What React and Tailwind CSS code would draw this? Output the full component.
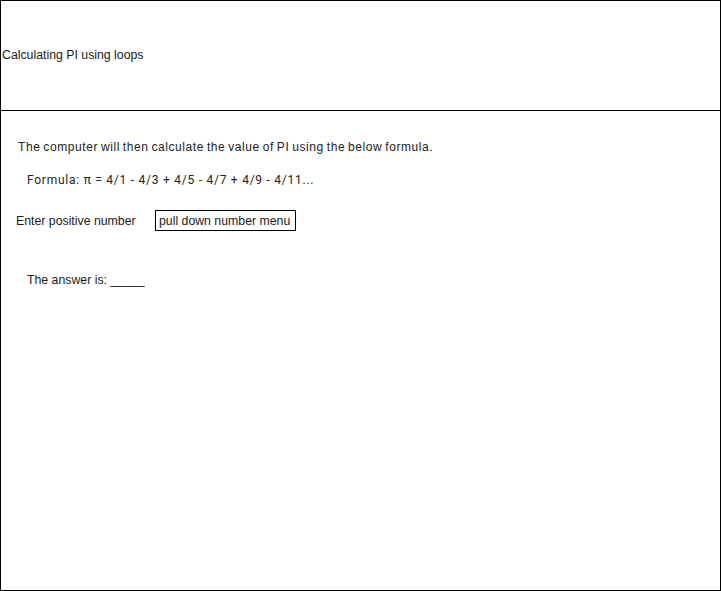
import React from "react";

const App = () => {
  return (
    <div
      className="w-[721px] h-[591px] border border-black bg-white text-[12.3px] leading-[14px] text-[#1a1a1a]"
      style={{ fontFamily: '"Liberation Sans", Arial, sans-serif' }}
    >
      {/* header */}
      <div className="h-[110px] border-b border-black flex items-center pl-[1px] pb-[2px]">
        <span>Calculating PI using loops</span>
      </div>

      {/* body */}
      <div className="pt-[29px]">
        <p className="pl-[17px] text-[12px] text-[#222] tracking-[0.58px] [word-spacing:-1px]">
          The computer will then calculate the value of PI using the below formula.
        </p>
        <p
          className="pl-[26px] mt-[19px] text-[12px] text-[#222] tracking-[0.75px]"
          style={{ fontFamily: "Roboto, sans-serif" }}
        >
          Formula: π = 4/1 - 4/3 + 4/5 - 4/7 + 4/9 - 4/11...
        </p>
        <div className="flex items-center mt-[23px] pl-[15px]">
          <span className="w-[139px]">Enter positive number</span>
          <div className="h-[21px] w-[141px] border border-black flex items-center px-[3px]">
            pull down number menu
          </div>
        </div>
        <p className="pl-[26px] mt-[42px]">The answer is: _____</p>
      </div>
    </div>
  );
};

export default App;
